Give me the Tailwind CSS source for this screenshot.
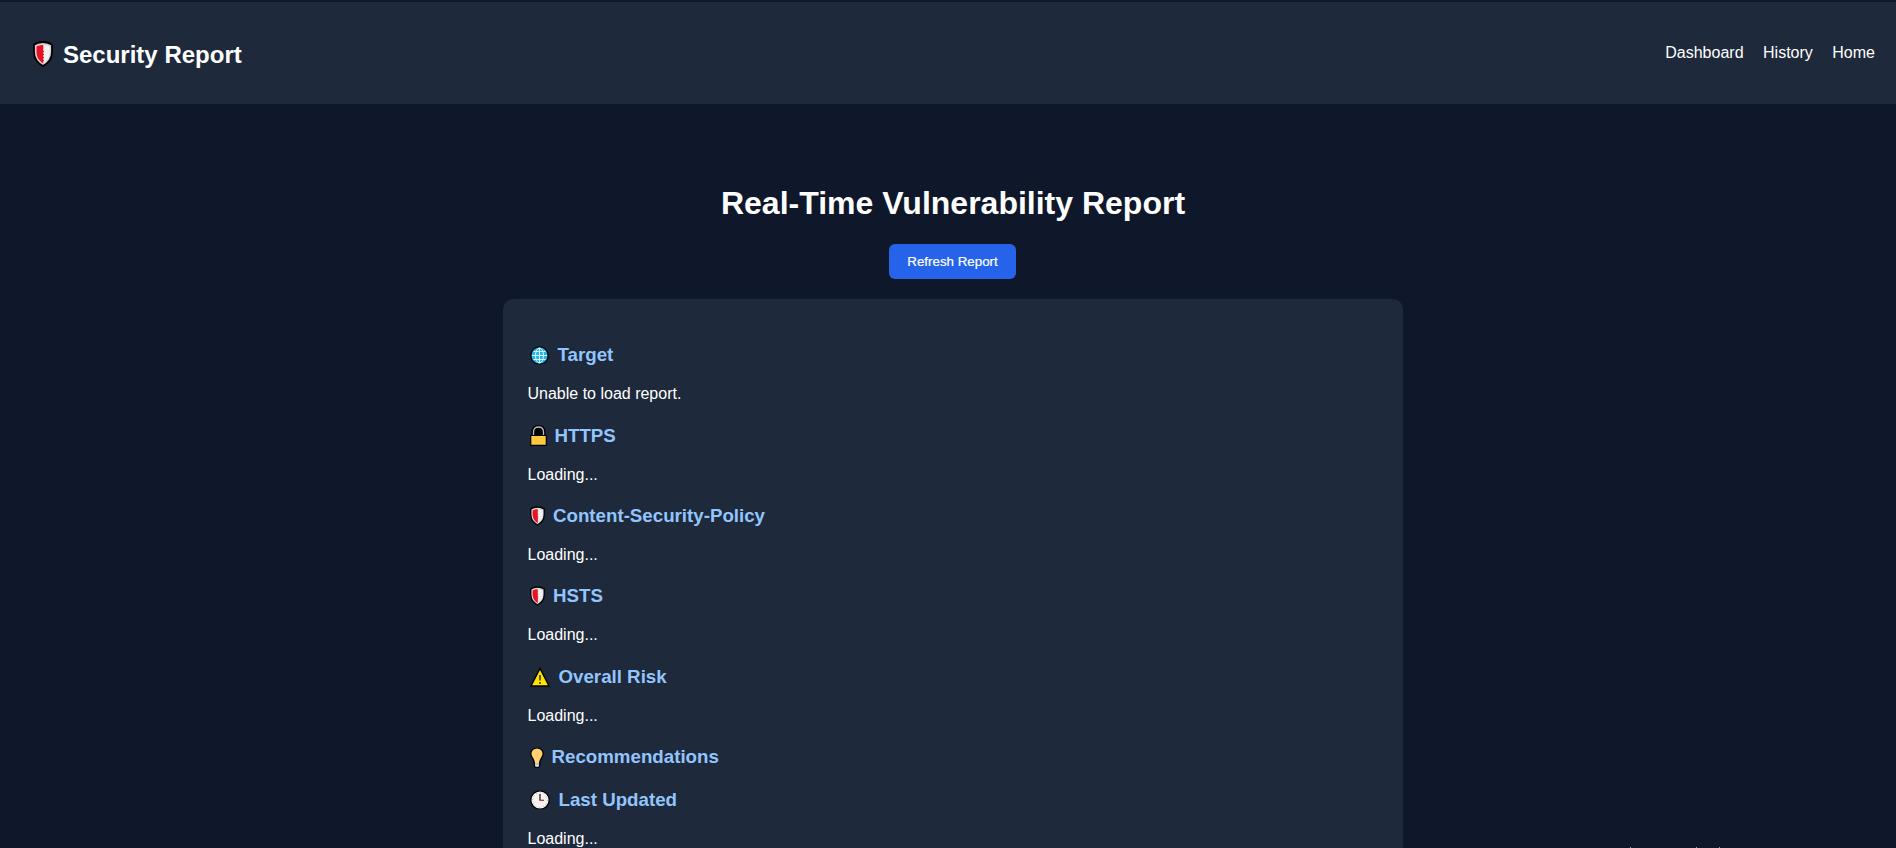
<!DOCTYPE html>
<html lang="en">
<head>
    <meta charset="UTF-8">
    <meta name="viewport" content="width=device-width, initial-scale=1.0">
    <title>Security Report</title>
    <script src="https://cdn.jsdelivr.net/npm/@tailwindcss/browser@4"></script>
</head>
<body class="h-screen overflow-hidden bg-[#0f172a] pt-0.5 font-['Liberation_Sans',Arial,sans-serif] text-base text-white">
    <!-- Shield shape shared by several headings -->
    <svg class="hidden">
        <symbol id="shield" viewBox="0 0 20 26">
            <path d="M10 1C13 1 16.500 1.800 19 3.800V11C19 17 15.500 22 10 25C4.500 22 1 17 1 11V3.800C3.500 1.800 7 1 10 1Z" fill="#d8d4d4" stroke="#000" stroke-width="1.800"></path>
            <path d="M10 4C12.500 4 14.500 4.500 16.800 5.500V11C16.800 16 14 20 10 22.500Z" fill="#f2f2f2"></path>
            <path d="M10.300 4C7.500 4 5.500 4.500 3.500 5.500V11C3.500 16 6 20 10.300 22.500V20H11V19H10.300V17H11V16H10.300V14H11V13H10.300V11H11V10H10.300Z" fill="#e81224"></path>
        </symbol>
    </svg>

    <!-- Header -->
    <header class="flex h-[102px] items-center justify-between bg-[#1e293b] pl-[33px] pr-[21px]">
        <h2 class="flex items-center text-2xl font-bold">
            <svg class="mr-2.5 mt-0.5 h-[26px] w-5"><use href="#shield"></use></svg>
            <span class="pt-1">Security Report</span>
        </h2>
        <nav class="flex gap-[19.5px] leading-[18px]">
            <a href="#">Dashboard</a>
            <a href="#">History</a>
            <a href="#">Home</a>
        </nav>
    </header>

    <!-- Main Content -->
    <main class="ml-2.5 flex flex-col items-center pt-[81px]">
        <h1 class="text-[32px] leading-[37px] font-bold">Real-Time Vulnerability Report</h1>
        <button class="mt-[22px] mr-px h-[35px] w-[127px] rounded-md bg-[#2563eb] text-[13.333px] [-webkit-text-stroke:0.2px_white]">Refresh Report</button>

        <div class="mt-5 w-[900px] rounded-[10px] bg-[#1e293b] pr-6 pl-[24.5px] pt-[43.5px] pb-6">
            <h3 class="flex h-[25px] items-center text-[18.72px] font-bold text-[#93c5fd]">
                <svg class="ml-0.5 mr-[9px] h-[19px] w-[19px]" viewBox="0 0 19 19">
                    <circle cx="9.500" cy="9.500" r="8.700" fill="#27b5e8" stroke="#000" stroke-width="1.300"></circle>
                    <g fill="none" stroke="#d8f6ff" stroke-width="1">
                        <path d="M9.500 2V17M2 9.500H17M3.500 5.500H15.500M3.500 13.500H15.500"></path>
                        <ellipse cx="9.500" cy="9.500" rx="4" ry="7.500"></ellipse>
                    </g>
                </svg>
                Target
            </h3>
            <p class="mt-[17.72px] mb-5 leading-[18px]">Unable to load report.</p>

            <h3 class="flex h-[25px] items-center text-[18.72px] font-bold text-[#93c5fd]">
                <svg class="ml-0.5 mr-2 h-[21px] w-[17px]" viewBox="0 0 17 21">
                    <path d="M2.500 11V7C2.500 3 5 1 8.500 1S14.500 3 14.500 7V11Z" fill="#000" stroke="#000" stroke-width="2"></path>
                    <path d="M3.500 11V7C3.500 3.500 5.500 2 8.500 2S13.500 3.500 13.500 7V11" fill="none" stroke="#b8bcc0" stroke-width="1.300"></path>
                    <path d="M.7 10.500H16.300V20.300H.7Z" fill="#ffc83d" stroke="#000" stroke-width="1.200"></path>
                </svg>
                HTTPS
            </h3>
            <p class="mt-[17.5px] mb-[19.72px] leading-[18px]">Loading...</p>

            <h3 class="flex h-[25px] items-center text-[18.72px] font-bold text-[#93c5fd]">
                <svg class="ml-0.5 mr-[8.5px] h-5 w-[15px]"><use href="#shield"></use></svg>
                Content-Security-Policy
            </h3>
            <p class="mt-[17.72px] mb-[19.72px] leading-[18px]">Loading...</p>

            <h3 class="flex h-[25px] items-center text-[18.72px] font-bold text-[#93c5fd]">
                <svg class="ml-0.5 mr-[8.5px] h-5 w-[15px]"><use href="#shield"></use></svg>
                HSTS
            </h3>
            <p class="mt-[17.5px] mb-[19.72px] leading-[18px]">Loading...</p>

            <h3 class="flex h-[25px] items-center text-[18.72px] font-bold text-[#93c5fd]">
                <svg class="ml-0.5 mr-[9px] h-5 w-5" viewBox="0 0 20 20">
                    <path d="M10 1.500L19 19H1Z" fill="#fde300" stroke="#000" stroke-width="1.400"></path>
                    <path d="M10 8V13.500M10 15V17" stroke="#222" stroke-width="1.400"></path>
                </svg>
                Overall Risk
            </h3>
            <p class="mt-[17.72px] mb-[19.72px] leading-[18px]">Loading...</p>

            <h3 class="flex h-[25px] items-center text-[18.72px] font-bold text-[#93c5fd]">
                <svg class="ml-0.5 mr-2 h-[21px] w-[14px]" viewBox="0 0 14 21">
                    <path d="M7 .8C3.500 .8 .8 3.400 .8 6.800C.8 10 4 12 4.300 15.500V18.500L5.500 20.300H8.500L9.700 18.500V15.500C10 12 13.200 10 13.200 6.800C13.200 3.400 10.500 .8 7 .8Z" fill="#ffcf70" stroke="#000" stroke-width="1.300"></path>
                    <path d="M5 15.500H9V18.500L8.200 19.600H5.800L5 18.500Z" fill="#d9dce0"></path>
                    <path d="M5 17H9" stroke="#8d9299" stroke-width=".6"></path>
                </svg>
                Recommendations
            </h3>

            <h3 class="mt-[18px] flex h-[25px] items-center text-[18.72px] font-bold text-[#93c5fd]">
                <svg class="ml-0.5 mr-[9px] h-5 w-5" viewBox="0 0 20 20">
                    <circle cx="10" cy="10" r="9.200" fill="#f4f4f4" stroke="#000" stroke-width="1.300"></circle>
                    <circle cx="10" cy="10" r="7.300" fill="none" stroke="#999" stroke-width="1" stroke-dasharray=".7 3.122"></circle>
                    <path d="M10 4V10" stroke="#222" stroke-width="1.300"></path>
                    <path d="M9.300 10.300H14" stroke="#c4283c" stroke-width="1.300"></path>
                </svg>
                Last Updated
            </h3>
            <p class="mt-[17.72px] mb-[19.72px] leading-[18px]">Loading...</p>
        </div>
    </main>

    <!-- Specks along the bottom edge -->
    <div class="fixed bottom-0 left-[1630px] flex h-px w-[92px]">
        <span class="h-px w-px bg-slate-400"></span>
        <span class="ml-[65px] h-px w-px bg-slate-400"></span>
        <span class="ml-[22px] h-px w-px bg-slate-400"></span>
    </div>
</body>
</html>
